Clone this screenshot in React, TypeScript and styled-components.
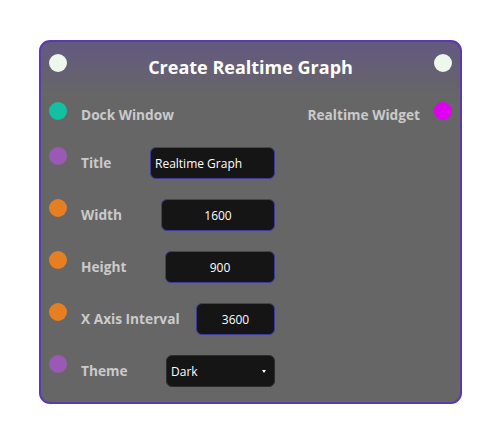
import styled, { createGlobalStyle } from 'styled-components'

const GlobalStyle = createGlobalStyle`
  html, body {
    margin: 0;
    padding: 0;
    background: #ffffff;
  }
  body {
    font-family: 'Open Sans', 'Liberation Sans', sans-serif;
  }
`

const socketColors = {
  exec: '#eef7ec',
  dock: '#13c1a1',
  string: '#9b59b6',
  number: '#e67e22',
  widget: '#e000f0',
}

type SocketKind = keyof typeof socketColors

interface Field {
  label: string
  socket: SocketKind
  value: string
  inputWidth: number
  align: 'left' | 'center'
  select?: boolean
}

const fields: Field[] = [
  { label: 'Title', socket: 'string', value: 'Realtime Graph', inputWidth: 125, align: 'left' },
  { label: 'Width', socket: 'number', value: '1600', inputWidth: 114, align: 'center' },
  { label: 'Height', socket: 'number', value: '900', inputWidth: 110, align: 'center' },
  { label: 'X Axis Interval', socket: 'number', value: '3600', inputWidth: 79, align: 'center' },
  { label: 'Theme', socket: 'string', value: 'Dark', inputWidth: 109, align: 'left', select: true },
]

export default function App() {
  return (
    <>
      <GlobalStyle />
      <Page>
        <Node>
          <Header>
            <Socket $kind="exec" />
            <NodeTitle>Create Realtime Graph</NodeTitle>
            <Socket $kind="exec" />
          </Header>

          <IoRow>
            <Socket $kind="dock" />
            <Label>Dock Window</Label>
            <Spacer />
            <Label>Realtime Widget</Label>
            <Socket $kind="widget" />
          </IoRow>

          {fields.map((f) => (
            <FieldRow key={f.label}>
              <Socket $kind={f.socket} />
              <Label>{f.label}</Label>
              {f.select ? (
                <SelectBox $w={f.inputWidth}>
                  <span>{f.value}</span>
                  <Arrow />
                </SelectBox>
              ) : (
                <Input $w={f.inputWidth} $align={f.align} defaultValue={f.value} />
              )}
            </FieldRow>
          ))}
        </Node>
      </Page>
    </>
  )
}

const Page = styled.div`
  padding: 40px 0 0 39px;
`

const Node = styled.div`
  width: 423px;
  height: 364px;
  box-sizing: border-box;
  border: 2px solid #5a3aae;
  border-radius: 11px;
  background: linear-gradient(180deg, #635981 0px, #666666 55px);
  padding: 12px 8px 0 8px;
  display: flex;
  flex-direction: column;
  gap: 20px;
`

const Header = styled.div`
  display: flex;
  align-items: flex-start;
  height: 28px;
`

const NodeTitle = styled.div`
  flex: 1;
  text-align: center;
  color: #ffffff;
  font-weight: 700;
  font-size: 18px;
  line-height: 27px;
`

const Socket = styled.div<{ $kind: SocketKind }>`
  width: 18px;
  height: 18px;
  min-width: 18px;
  border-radius: 50%;
  flex-shrink: 0;
  background: ${({ $kind }) => socketColors[$kind]};
`

const IoRow = styled.div`
  display: flex;
  align-items: flex-start;
  gap: 14px;
  height: 26px;
  margin-bottom: -1px;
`

const Spacer = styled.div`
  flex: 1;
`

const Label = styled.div`
  color: #cacaca;
  font-weight: 700;
  font-size: 13.7px;
  line-height: 26px;
  white-space: nowrap;
`

const FieldRow = styled.div`
  display: flex;
  align-items: flex-start;
  gap: 14px;
  width: 226px;
  height: 32px;

  ${Label} {
    line-height: 32px;
    flex: 1;
  }
`

const Input = styled.input<{ $w: number; $align: 'left' | 'center' }>`
  width: ${({ $w }) => $w}px;
  height: 32px;
  box-sizing: border-box;
  background: #151515;
  border: 1px solid #3c3a9c;
  border-radius: 6px;
  color: #ffffff;
  font-family: 'Open Sans', 'Liberation Sans', sans-serif;
  font-size: 12px;
  padding: 0 4px;
  text-align: ${({ $align }) => $align};
  outline: none;
`

const SelectBox = styled.div<{ $w: number }>`
  width: ${({ $w }) => $w}px;
  height: 32px;
  box-sizing: border-box;
  background: #151515;
  border: 1px solid #2c2c2c;
  border-radius: 6px;
  color: #ffffff;
  font-size: 12px;
  display: flex;
  align-items: center;
  justify-content: space-between;
  padding: 0 8px 0 4px;
`

const Arrow = styled.div`
  width: 0;
  height: 0;
  border-left: 2px solid transparent;
  border-right: 2px solid transparent;
  border-top: 3px solid #ffffff;
`
